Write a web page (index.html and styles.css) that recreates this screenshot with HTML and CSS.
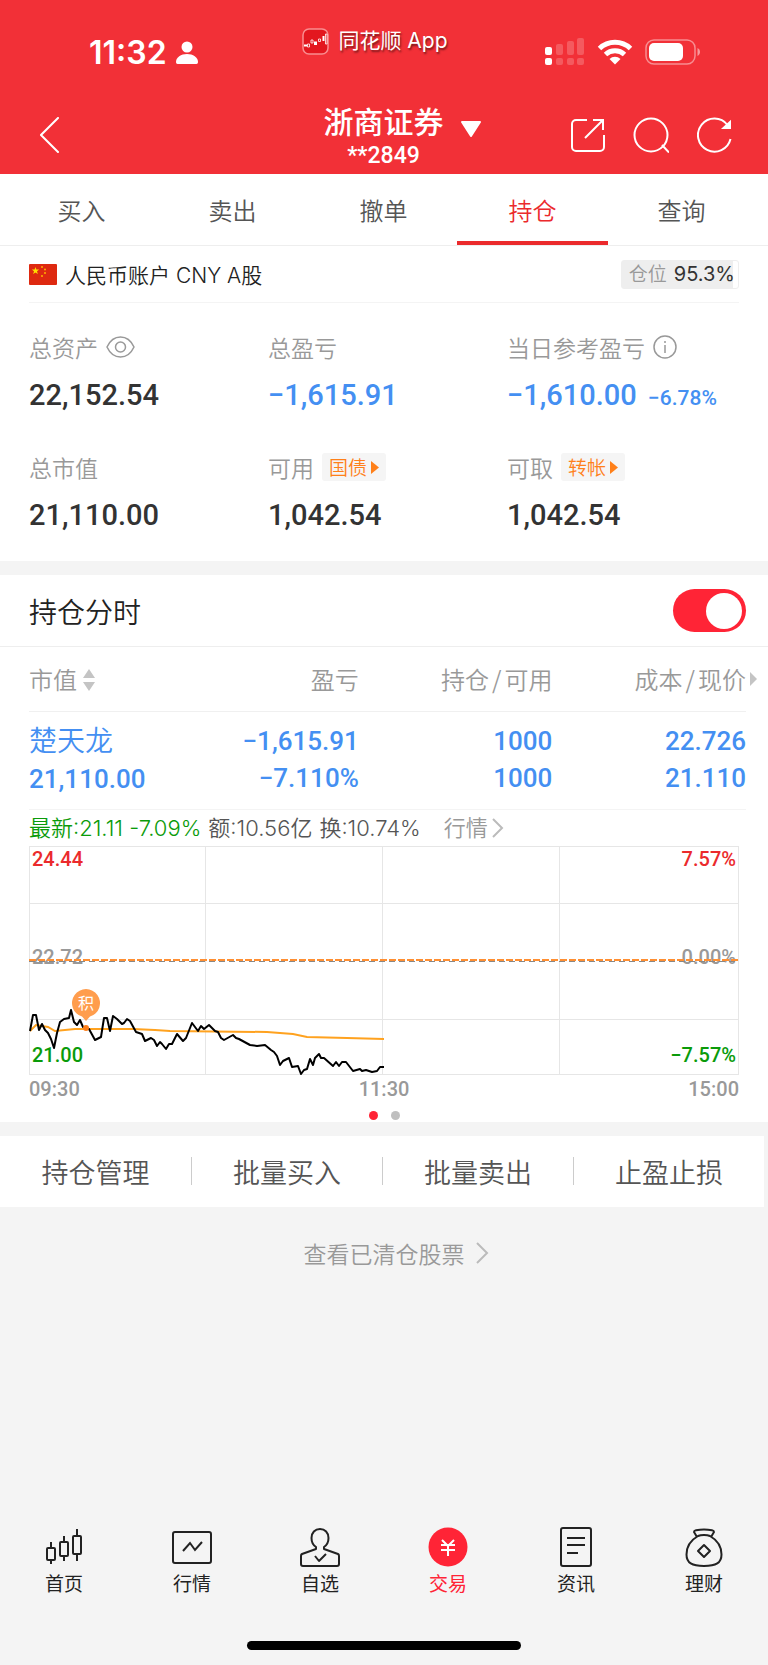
FILE: index.html
```html
<!DOCTYPE html>
<html lang="zh-CN">
<head>
  <meta charset="UTF-8">
  <meta name="viewport" content="width=device-width, initial-scale=1">
  <title>浙商证券 持仓</title>
  <link rel="stylesheet" href="styles.css">
</head>
<body>

  <header class="header">
    <div class="status">
      <div class="status-time">
        <span>11:32</span>
        <svg width="22" height="24" viewBox="0 0 22 24" fill="#fff"><circle cx="11" cy="6" r="5.5"/><path d="M0 21c0-4.500 5-8 11-8s11 3.500 11 8c0 1-.6 2-1.600 2H1.600C.6 23 0 22 0 21z"/></svg>
      </div>
      <div class="status-app">
        <svg width="27" height="27" viewBox="0 0 27 27">
          <rect x="1" y="1" width="25" height="25" rx="6" fill="#e3171f" stroke="#f98d90" stroke-width="1.500"/>
          <path d="M2 17.500h3M21.500 8v5" stroke="#fff" stroke-width="2"/>
          <path d="M5.500 16h2v3h-2zM9 12h2v3h-2zM16.500 11h2v2.500h-2zM23.500 6h1.500v10h-1.500z" fill="none" stroke="#fff" stroke-width=".8"/>
          <path d="M12 13.500h3v3.500h-3z" fill="#fff"/>
        </svg>
        <span>同花顺 App</span>
      </div>
      <div class="status-icons">
        <svg width="40" height="28" viewBox="0 0 40 28" fill="#fff">
          <rect x="0" y="9" width="7" height="8" rx="2"/><rect x="0" y="20" width="7" height="7" rx="2"/>
          <g opacity=".2">
            <rect x="11" y="6" width="7" height="11" rx="2"/><rect x="11" y="20" width="7" height="7" rx="2"/>
            <rect x="22" y="3" width="7" height="14" rx="2"/><rect x="22" y="20" width="7" height="7" rx="2"/>
            <rect x="32" y="0" width="7" height="17" rx="2"/><rect x="32" y="20" width="7" height="7" rx="2"/>
          </g>
        </svg>
        <svg width="36" height="26" viewBox="0 0 36 26" fill="none" stroke="#fff" stroke-width="5">
          <path d="M2.500 9.500a22.500 22.500 0 0 1 31 0"/>
          <path d="M8.500 15.500a14 14 0 0 1 19 0"/>
          <path d="M18 25.500l-5.500-5.500a8 8 0 0 1 11 0z" fill="#fff" stroke="none"/>
        </svg>
        <svg width="56" height="26" viewBox="0 0 56 26">
          <rect x="1" y="1" width="49" height="24" rx="8" fill="none" stroke="#fff" stroke-opacity=".45" stroke-width="1.500"/>
          <rect x="4" y="4" width="34" height="18" rx="5" fill="#fff"/>
          <path d="M52.500 9v8c1.600-.8 2.500-2.200 2.500-4s-.9-3.200-2.500-4z" fill="#fff" fill-opacity=".5"/>
        </svg>
      </div>
    </div>

    <div class="titlebar">
      <button class="icon-btn back" aria-label="返回">
        <svg width="20" height="36" viewBox="0 0 20 36" fill="none" stroke="#fff" stroke-width="2" stroke-linecap="round"><path d="M18 1L1 18l17 17"/></svg>
      </button>
      <button class="broker">
        <span class="broker-name">浙商证券</span>
        <svg class="broker-arrow" width="22" height="18" viewBox="0 0 22 18"><path d="M2 2h18l-9 14z" fill="#fff" stroke="#fff" stroke-width="2" stroke-linejoin="round"/></svg>
        <span class="broker-no">**2849</span>
      </button>
      <div class="title-actions">
        <button class="icon-btn" aria-label="分享">
          <svg width="34" height="34" viewBox="0 0 34 34" fill="none" stroke="#fff" stroke-width="2"><path d="M16 2H5a4 4 0 0 0-4 4v23a4 4 0 0 0 4 4h24a4 4 0 0 0 4-4V17M22 2h10v10M32 2L14 20"/></svg>
        </button>
        <button class="icon-btn" aria-label="搜索">
          <svg width="36" height="36" viewBox="0 0 36 36" fill="none" stroke="#fff" stroke-width="2"><circle cx="18" cy="18" r="16.500"/><path d="M29 28l7 7.500"/></svg>
        </button>
        <button class="icon-btn" aria-label="刷新">
          <svg width="36" height="36" viewBox="0 0 36 36" fill="none" stroke="#fff" stroke-width="2"><path d="M30.500 8A16.500 16.500 0 1 0 33.500 22"/><path d="M33 5v6h-6.500z" fill="#fff"/></svg>
        </button>
      </div>
    </div>
  </header>

  <nav class="tabs">
    <a class="tab" href="#buy">买入</a>
    <a class="tab" href="#sell">卖出</a>
    <a class="tab" href="#cancel">撤单</a>
    <a class="tab active" href="#hold">持仓</a>
    <a class="tab" href="#query">查询</a>
  </nav>

  <main>
    <section class="account">
      <div class="account-head">
        <svg width="28" height="21" viewBox="0 0 28 21">
          <rect width="28" height="21" rx="1" fill="#de2910"/>
          <path d="M6.500 3l.9 2.600h2.800L8 7.300l.8 2.700-2.300-1.600L4.200 10 5 7.300 2.800 5.600h2.800z" fill="#ffde00"/>
          <g fill="#ffb000"><circle cx="13" cy="3" r="1"/><circle cx="16" cy="5.500" r="1"/><circle cx="16" cy="9" r="1"/><circle cx="13" cy="12" r="1"/></g>
        </svg>
        <span class="account-name">人民币账户 CNY A股</span>
        <span class="ratio"><span class="ratio-label">仓位</span>95.3%</span>
      </div>

      <div class="metrics">
        <div class="metric">
          <div class="metric-label">总资产
            <svg width="29" height="22" viewBox="0 0 29 22" fill="none" stroke="#999" stroke-width="1.500"><path d="M1 11C4 4.500 9 1 14.500 1S25 4.500 28 11c-3 6.500-8 10-13.500 10S4 17.500 1 11z"/><circle cx="14.500" cy="11" r="5"/></svg>
          </div>
          <div class="metric-value">22,152.54</div>
        </div>
        <div class="metric">
          <div class="metric-label">总盈亏</div>
          <div class="metric-value blue">−1,615.91</div>
        </div>
        <div class="metric">
          <div class="metric-label">当日参考盈亏
            <svg width="24" height="24" viewBox="0 0 24 24" fill="none" stroke="#999" stroke-width="1.500"><circle cx="12" cy="12" r="11"/><path d="M12 10v8M12 6v2"/></svg>
          </div>
          <div class="metric-value blue">−1,610.00 <small>−6.78%</small></div>
        </div>
        <div class="metric">
          <div class="metric-label">总市值</div>
          <div class="metric-value">21,110.00</div>
        </div>
        <div class="metric">
          <div class="metric-label">可用
            <a class="chip" href="#bond">国债<svg width="8" height="13" viewBox="0 0 8 13" fill="#ff801a"><path d="M0 0l8 6.500L0 13z"/></svg></a>
          </div>
          <div class="metric-value">1,042.54</div>
        </div>
        <div class="metric">
          <div class="metric-label">可取
            <a class="chip" href="#transfer">转帐<svg width="8" height="13" viewBox="0 0 8 13" fill="#ff801a"><path d="M0 0l8 6.500L0 13z"/></svg></a>
          </div>
          <div class="metric-value">1,042.54</div>
        </div>
      </div>
    </section>

    <section class="holdings">
      <div class="holdings-head">
        <label for="minute">持仓分时</label>
        <input class="switch" type="checkbox" id="minute" checked>
      </div>

      <table class="stocks">
        <thead>
          <tr>
            <th class="col-value">市值<svg class="sort" width="14" height="24" viewBox="0 0 14 24" fill="#c4c4c4"><path d="M1 10l6-9 6 9zM1 14h12l-6 9z"/></svg></th>
            <th class="col-profit">盈亏</th>
            <th class="col-count">持仓<span class="slash">/</span>可用</th>
            <th class="col-price">成本<span class="slash">/</span>现价<svg class="more" width="7" height="14" viewBox="0 0 7 14" fill="#c4c4c4"><path d="M0 0l7 7-7 7z"/></svg></th>
          </tr>
        </thead>
        <tbody>
          <tr>
            <td><span class="stock-name">楚天龙</span><br>21,110.00</td>
            <td>−1,615.91<br>−7.110%</td>
            <td>1000<br>1000</td>
            <td>22.726<br>21.110</td>
          </tr>
        </tbody>
      </table>

      <div class="quote">
        <span class="green">最新:21.11 -7.09%</span>
        <span>额:10.56亿</span>
        <span>换:10.74%</span>
        <a class="quote-link" href="#quote">行情<svg width="12" height="20" viewBox="0 0 12 20" fill="none" stroke="#bbb" stroke-width="2"><path d="M1 1l9 9-9 9"/></svg></a>
      </div>

      <svg class="chart" viewBox="0 0 710 229">
        <g class="grid">
          <path d="M0 57.500h710M0 173.500h710M176.500 0v229M353.500 0v229M530.500 0v229"/>
          <rect x=".5" y=".5" width="709" height="228"/>
        </g>
        <g class="chart-text">
          <text class="up" x="3" y="20">24.44</text>
          <text class="up end" x="707" y="20">7.57%</text>
          <text class="flat" x="3" y="118">22.72</text>
          <text class="flat end" x="707" y="118">0.00%</text>
          <text class="down" x="3" y="216">21.00</text>
          <text class="down end" x="707" y="216">−7.57%</text>
        </g>
        <path class="base" d="M0 115.500h710"/>
        <path class="cost" d="M0 114h710"/>
        <path class="average" d="M1 185L7 179 19 181 26 185 46 183 104 183 126 184 141 185 238 186 264 188 278 191 318 192 355 193"/>
        <path class="price" d="M1 185L4 169 7 169 10 184 13 178 16 184 19 187 22 193 25 202 28 187 31 176 35 173 40 172 42 164 45 176 48 179 51 174 54 181 60 183 66 194 72 191 75 172 78 172 81 185 84 170 88 173 93 178 95 177 98 173 101 175 107 186 113 188 116 195 122 192 125 194 128 200 131 196 133 198 137 203 140 198 143 198 148 188 154 195 157 192 163 177 169 185 172 180 175 183 180 179 186 185 189 186 192 192 195 194 204 189 207 192 210 193 221 199 228 200 236 199 242 204 245 206 248 210 251 219 254 215 260 212 263 221 269 220 272 228 275 224 278 223 281 213 284 219 286 212 290 208 292 212 295 212 304 220 307 216 310 220 313 216 317 216 324 225 331 223 333 225 337 224 343 226 348 225 351 221 355 221"/>
        <circle cx="57" cy="182" r="3" fill="#ff801a"/>
        <path class="pin" d="M57 175l-4-4.500a14 14 0 1 1 8 0z"/>
        <text class="mark" x="57" y="163">积</text>
      </svg>

      <div class="axis"><span>09:30</span><span>11:30</span><span>15:00</span></div>
      <div class="dots"><i class="dot on"></i><i class="dot"></i></div>
    </section>

    <div class="actions">
      <button class="action">持仓管理</button>
      <button class="action">批量买入</button>
      <button class="action">批量卖出</button>
      <button class="action">止盈止损</button>
    </div>

    <a class="cleared" href="#cleared">查看已清仓股票<svg width="13" height="22" viewBox="0 0 13 22" fill="none" stroke="#bbb" stroke-width="2"><path d="M1 1l10 10L1 21"/></svg></a>
  </main>

  <nav class="bottom">
    <a class="bottom-item" href="#home">
      <svg width="40" height="40" viewBox="0 0 40 40" fill="none" stroke="#222" stroke-width="2"><rect x="3" y="21" width="8" height="12" rx="1"/><rect x="16" y="15" width="8" height="14" rx="1"/><rect x="29" y="9" width="8" height="18" rx="1"/><path d="M7 15v6M7 33v4M20 9v6M20 29v5M33 2v7M33 27v7"/></svg>
      首页
    </a>
    <a class="bottom-item" href="#market">
      <svg width="40" height="40" viewBox="0 0 40 40" fill="none" stroke="#222" stroke-width="2"><rect x="1" y="5" width="38" height="31" rx="2"/><path d="M11 24l7-8 5 7 7-8"/></svg>
      行情
    </a>
    <a class="bottom-item" href="#watch">
      <svg width="40" height="40" viewBox="0 0 40 40" fill="none" stroke="#222" stroke-width="2" stroke-linejoin="round"><path d="M16 20c-3-2-4.500-5-4.500-9C11.500 5.500 15 2 20 2s8.500 3.500 8.500 9c0 4-1.500 7-4.500 9v2l14 5c1 .5 1 1 1 2v8c0 1.500-.5 2-2 2H3c-1.500 0-2-.5-2-2v-8c0-1 0-1.500 1-2l14-5z"/><path d="M15 29l4 5 7-7"/></svg>
      自选
    </a>
    <a class="bottom-item current" href="#trade">
      <svg width="40" height="40" viewBox="0 0 40 40" fill="none" stroke="#fff" stroke-width="2"><circle cx="20" cy="20" r="19.500" fill="#ff2436" stroke="none"/><path d="M14 13l6 6 6-6M20 19v10M13 18h14M13 23h14"/></svg>
      交易
    </a>
    <a class="bottom-item" href="#news">
      <svg width="40" height="40" viewBox="0 0 40 40" fill="none" stroke="#222" stroke-width="2"><rect x="5" y="1" width="30" height="38" rx="2"/><path d="M11 11h18M11 18h18M11 26h11"/></svg>
      资讯
    </a>
    <a class="bottom-item" href="#wealth">
      <svg width="40" height="40" viewBox="0 0 40 40" fill="none" stroke="#222" stroke-width="2" stroke-linejoin="round"><path d="M13 10l-3-5c0-1 1-1.500 2-1.700 5-.9 11-.9 16 0 1 .2 2 .7 2 1.700l-3 5"/><path d="M14 10c3-1.500 9-1.500 12 0C33 14 37.500 21 37.500 28.500 37.500 37 32 40 20 40S2.500 37 2.500 28.500C2.500 21 7 14 14 10z" transform="translate(0 -1)"/><path d="M20 18l6 6-6 6-6-6z"/></svg>
      理财
    </a>
  </nav>
  <div class="home-bar"></div>

</body>
</html>
```
FILE: styles.css
```css
* { box-sizing: border-box; }
body { margin: 0; min-height: 100vh; display: flex; flex-direction: column; background: #f4f4f4; color: #222; font-family: "Noto Sans CJK SC", sans-serif; font-weight: 350; }
a { color: inherit; text-decoration: none; }
button { border: 0; padding: 0; background: none; color: inherit; font: inherit; }
svg { display: block; flex: none; }

/* header */
.header { background: #f23037; color: #fff; height: 174px; }
.status { display: grid; grid-template-columns: 1fr auto 1fr; height: 96px; padding: 0 67px 0 89px; }
.status-time { display: flex; align-items: center; gap: 9px; padding-top: 10px; font: 600 32px/40px Inter, sans-serif; }
.status-app { display: flex; align-items: center; gap: 9px; height: 82px; margin-right: 40px; font-size: 21px; font-weight: 400; line-height: 30px; text-shadow: 1px 2px 2px rgba(0, 0, 0, .5); font-family: Inter, "Noto Sans CJK SC", sans-serif; }
.status-icons { display: flex; align-items: center; justify-content: flex-end; gap: 12px; padding-top: 8px; }
.titlebar { display: grid; grid-template-columns: 1fr auto 1fr; align-items: center; height: 78px; padding: 0 35px 0 40px; }
.icon-btn { display: flex; }
.broker { display: grid; grid-template-columns: auto 22px; column-gap: 16px; align-items: center; margin-left: 32px; padding-top: 4px; }
.broker-name { font-size: 30px; font-weight: 500; line-height: 38px; }
.broker-arrow { margin-top: 18px; }
.broker-no { font: 500 23px/34px Roboto, sans-serif; text-align: center; }
.title-actions { display: flex; align-items: center; justify-content: flex-end; gap: 28px; }

/* tabs */
.tabs { display: flex; height: 72px; padding: 0 11px 0 6px; background: #fff; border-bottom: 1px solid #eee; }
.tab { flex: 1; color: #555; font-size: 24px; line-height: 72px; text-align: center; }
.tab.active { margin: 0 -2px; color: #eb2a2c; border-bottom: 4px solid #eb2a2c; }

/* account */
.account { background: #fff; padding: 0 29px 26px; }
.account-head { display: flex; align-items: center; gap: 8px; height: 57px; border-bottom: 1px solid #f4f4f4; font-size: 21px; }
.account-name { flex: 1; font-family: Inter, "Noto Sans CJK SC", sans-serif; }
.ratio { display: flex; gap: 7px; padding: 0 3px 0 7px; border: 1px solid #eee; border-radius: 3px; background: linear-gradient(to right, #eee 95.3%, #fff 95.3%); font: 400 20px/27px Inter, "Noto Sans CJK SC", sans-serif; color: #333; }
.ratio-label { color: #999; font-size: 19px; font-weight: 350; }
.metrics { display: grid; grid-template-columns: 239px 239px 1fr; row-gap: 31px; padding-top: 26px; }
.metric-label { display: flex; align-items: center; gap: 8px; color: #999; font-size: 23px; line-height: 36px; white-space: nowrap; }
.metric-value { color: #333; font: 500 29px/40px Roboto, sans-serif; margin-top: 10px; white-space: nowrap; }
.metric-value small { font-size: 21px; margin-left: 4px; font-weight: 500; }
.blue { color: #448ff2; }
.chip { display: flex; align-items: center; gap: 4px; padding: 0 7px; border-radius: 3px; background: #f5f5f5; color: #ff801a; font-size: 19px; line-height: 28px; }

/* holdings */
.holdings { margin-top: 14px; background: #fff; }
.holdings-head { display: flex; align-items: center; justify-content: space-between; height: 72px; padding: 0 22px 0 29px; border-bottom: 1px solid #eee; font-size: 28px; }
.switch { appearance: none; width: 73px; height: 43px; margin: 0; padding: 4px; display: flex; justify-content: flex-start; border-radius: 22px; background: #ccc; }
.switch:checked { justify-content: flex-end; background: #ff2436; }
.switch::before { content: ""; width: 36px; height: 36px; border-radius: 50%; background: #fff; }
.stocks { width: calc(100% - 51px); margin-left: 29px; border-collapse: collapse; table-layout: fixed; }
.stocks th { height: 64px; padding: 0; color: #999; font-size: 24px; font-weight: 350; text-align: right; white-space: nowrap; border-bottom: 1px solid #f0f0f0; }
.stocks td { height: 98px; padding: 0; color: #448ff2; font: 500 26px/37px Roboto, "Noto Sans CJK SC", sans-serif; text-align: right; border-bottom: 1px solid #f4f4f4; }
.stocks th:first-child, .stocks td:first-child { text-align: left; }
.stock-name { font-size: 28px; font-weight: 350; }
.slash { margin: 0 3px; }
.col-value { width: 23%; }
.col-profit { width: 23%; }
.col-count { width: 27%; }
.sort { display: inline-block; margin-left: 5px; vertical-align: -3px; }
.col-price { position: relative; }
.more { position: absolute; left: calc(100% + 4px); top: 25px; }
.quote { display: flex; align-items: center; gap: 7px; height: 36px; padding-left: 29px; color: #555; font: 350 22px/36px Inter, "Noto Sans CJK SC", sans-serif; white-space: nowrap; }
.green { color: #0a9b0a; }
.quote-link { display: flex; align-items: center; gap: 4px; margin-left: 16px; color: #999; }

/* chart */
.chart { width: calc(100% - 58px); margin: 0 29px; }
.chart path { fill: none; }
.grid path, .grid rect { fill: none; stroke: #e6e6e6; }
.chart-text { font: 500 20px Roboto, sans-serif; }
.end { text-anchor: end; }
.up { fill: #eb2a2c; }
.flat { fill: #999; }
.down { fill: #0a9b0a; }
.chart .base { stroke: #888; stroke-dasharray: 6 4; }
.chart .cost { stroke: #ff8f32; stroke-width: 2; stroke-dasharray: 7 2; }
.chart .average { stroke: #ffa21f; stroke-width: 2; }
.chart .price { stroke: #000; stroke-width: 2; stroke-linejoin: round; }
.chart .pin { fill: #ff9d4d; }
.mark { fill: #fff; font-size: 16px; font-weight: 400; text-anchor: middle; }
.axis { display: flex; justify-content: space-between; padding: 0 29px; color: #999; font: 500 20px/28px Roboto, sans-serif; }
.dots { display: flex; justify-content: center; gap: 13px; height: 19px; padding-top: 8px; }
.dot { width: 9px; height: 9px; border-radius: 50%; background: #bfbfbf; }
.dot.on { background: #ff2436; }

/* actions */
.actions { display: flex; margin: 14px 4px 0 0; background: #fff; }
.action { flex: 1; display: flex; align-items: center; height: 71px; color: #555; font-size: 27px; justify-content: center; }
.action + .action::before { content: ""; width: 1px; height: 28px; margin-right: auto; background: #ccc; }
.action + .action::after { content: ""; margin-left: auto; }
.cleared { display: flex; align-items: center; justify-content: center; gap: 11px; height: 92px; padding-left: 24px; color: #999; font-size: 23px; }

/* bottom bar */
.bottom { display: grid; grid-template-columns: repeat(6, 1fr); margin-top: auto; }
.bottom-item { display: flex; flex-direction: column; align-items: center; gap: 2px; font-size: 19px; font-weight: 400; line-height: 28px; }
.current { color: #ff2436; }
.home-bar { width: 274px; height: 9px; margin: 44px auto 15px; border-radius: 5px; background: #000; }
```
